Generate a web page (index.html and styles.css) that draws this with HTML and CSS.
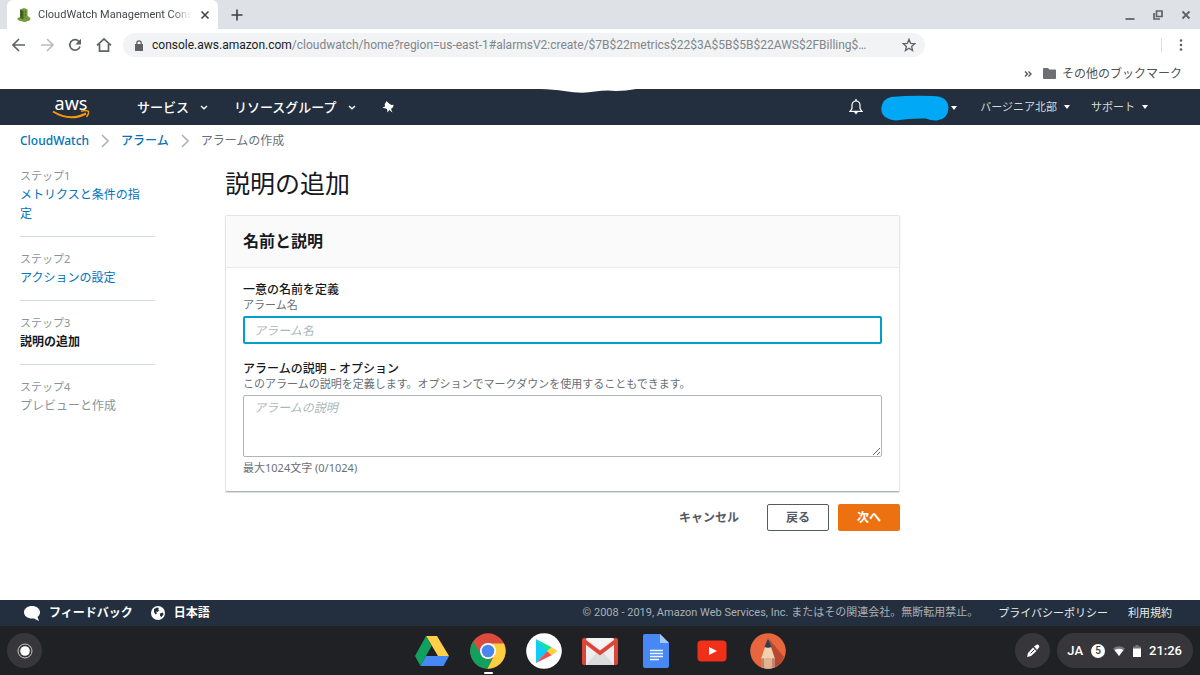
FILE: index.html
```html
<!DOCTYPE html>
<html lang="ja">
<head>
<meta charset="utf-8">
<meta name="viewport" content="width=device-width, initial-scale=1">
<title>CloudWatch Management Console</title>
<link rel="stylesheet" href="styles.css">
</head>
<body>
<div class="tabstrip">
  <div class="tab">
    <svg class="favicon" width="14" height="14" viewBox="0 0 14 14" aria-hidden="true"><path d="M3 1.500L7 0l3.500 1.500V8l3 2-.5 2-5 2-7-2-.5-2L3 9z" fill="#6f9a3c"/><path d="M3 1.500L6.500 3v8.500L3 10z" fill="#4b612c"/><path d="M1 10l6 1.500 6-1.500-.3 2L7.500 14 .8 12z" fill="#759c3e"/><path d="M4.500 3v1.500M4.500 6v1.500M8 4h1M8 7h1" stroke="#34451d" stroke-width="1"/></svg>
    <span class="tab-title">CloudWatch Management Cons</span>
    <button class="icon-btn" aria-label="タブを閉じる"><svg width="10" height="10" viewBox="0 0 10 10"><path d="M1.500 1.500l7 7m0-7l-7 7" stroke="#3c4043" stroke-width="1.500"/></svg></button>
  </div>
  <button class="icon-btn new-tab" aria-label="新しいタブ"><svg width="12" height="12" viewBox="0 0 12 12"><path d="M6 .5v11M.5 6h11" stroke="#3c4043" stroke-width="1.600"/></svg></button>
  <div class="window-controls">
    <button class="icon-btn" aria-label="最小化"><svg width="10" height="12" viewBox="0 0 10 12"><path d="M.5 10h9" stroke="#5f6368" stroke-width="1.800"/></svg></button>
    <button class="icon-btn" aria-label="元に戻す"><svg width="10" height="10" viewBox="0 0 10 10"><path d="M3.500 1h5.500v5.500h-5.500zM1 3v6h6" fill="none" stroke="#5f6368" stroke-width="1.700"/></svg></button>
    <button class="icon-btn" aria-label="閉じる"><svg width="10" height="10" viewBox="0 0 10 10"><path d="M1.500 1.500l7 7m0-7l-7 7" stroke="#5f6368" stroke-width="1.800"/></svg></button>
  </div>
</div>

<div class="toolbar">
  <button class="icon-btn" aria-label="戻る"><svg width="14" height="14" viewBox="0 0 14 14"><path d="M13 7H1.500M7 1L1 7l6 6" fill="none" stroke="#5f6368" stroke-width="1.600"/></svg></button>
  <button class="icon-btn" aria-label="進む"><svg width="14" height="14" viewBox="0 0 14 14"><path d="M1 7h11.500M7 1l6 6-6 6" fill="none" stroke="#babcbe" stroke-width="1.600"/></svg></button>
  <button class="icon-btn" aria-label="再読み込み"><svg width="14" height="14" viewBox="0 0 14 14"><path d="M12 8.500A5.200 5.200 0 1 1 10.800 3.300L12 4.500" fill="none" stroke="#5f6368" stroke-width="1.700"/><path d="M13 .8v5.700H7.300z" fill="#5f6368"/></svg></button>
  <button class="icon-btn" aria-label="ホーム"><svg width="16" height="16" viewBox="0 0 16 16"><path d="M1 8.300L8 1.800l7 6.500M3.500 7v7.200h9V7" fill="none" stroke="#5f6368" stroke-width="1.700"/></svg></button>
  <div class="omnibox">
    <svg width="8" height="11" viewBox="0 0 8 11" aria-hidden="true"><path d="M0 4h8v7H0z" fill="#5f6368"/><path d="M1.800 4.500V3a2.200 2.200 0 0 1 4.400 0v1.500" fill="none" stroke="#5f6368" stroke-width="1.200"/></svg>
    <div class="url"><span class="host">console.aws.amazon.com</span>/cloudwatch/home?region=us-east-1#alarmsV2:create/$7B$22metrics$22$3A$5B$5B$22AWS$2FBilling$…</div>
    <button class="icon-btn" aria-label="ブックマークに追加"><svg width="14" height="14" viewBox="0 0 14 14"><path d="M7 1.300l1.600 4 4.300.3-3.300 2.800 1 4.200L7 10.300l-3.600 2.300 1-4.200L1.100 5.600l4.300-.3z" fill="none" stroke="#5f6368" stroke-width="1.300"/></svg></button>
  </div>
  <div class="toolbar-end">
    <span class="toolbar-sep"></span>
    <button class="icon-btn" aria-label="メニュー"><svg width="4" height="12" viewBox="0 0 4 12" fill="#5f6368"><circle cx="2" cy="1.500" r="1.300"/><circle cx="2" cy="6" r="1.300"/><circle cx="2" cy="10.500" r="1.300"/></svg></button>
  </div>
</div>

<div class="bookmarks">
  <button class="icon-btn" aria-label="他のブックマークを表示"><svg width="8" height="6" viewBox="0 0 8 6"><path d="M1 .5L3.500 3 1 5.500M4.500 .5L7 3 4.500 5.500" fill="none" stroke="#4d5156" stroke-width="1.300"/></svg></button>
  <button class="folder"><svg width="13" height="11" viewBox="0 0 13 11" aria-hidden="true"><path d="M1 0h4l1.500 1.500H12a1 1 0 0 1 1 1V10a1 1 0 0 1-1 1H1a1 1 0 0 1-1-1V1a1 1 0 0 1 1-1z" fill="#6b6e72"/></svg>その他のブックマーク</button>
</div>

<header class="nav">
  <svg class="scribble" width="96" height="5" viewBox="0 0 96 5" aria-hidden="true"><path d="M0 0Q14 .5 24 2Q42 5 55 2.500Q66 1 76 2Q86 2 96 0z" fill="#fff"/></svg>
  <a class="aws-logo" href="#" aria-label="AWS">
    <span class="aws-word">aws</span>
    <svg class="aws-smile" width="38" height="9" viewBox="0 0 38 9" aria-hidden="true"><path d="M1 1.500Q18 12 34 3.500" fill="none" stroke="#f90" stroke-width="2"/><path d="M29 1.300Q34 0 36.500 1.300Q37 4 34.500 7" fill="none" stroke="#f90" stroke-width="1.400"/></svg>
  </a>
  <button class="nav-main">サービス<svg width="8" height="5" viewBox="0 0 8 5"><path d="M1 1l3 2.800L7 1" fill="none" stroke="#fff" stroke-width="1.400"/></svg></button>
  <button class="nav-main">リソースグループ<svg width="8" height="5" viewBox="0 0 8 5"><path d="M1 1l3 2.800L7 1" fill="none" stroke="#fff" stroke-width="1.400"/></svg></button>
  <button class="icon-btn pin" aria-label="ピン留め"><svg width="12" height="12" viewBox="0 0 12 12"><path d="M4.500 0L7 2.500 9.500 4l2-.2-.3 2.200L9 8l1.500 3.500L7.300 9 5.500 11.500 5 8 .3 6.500 3 5.500 2.700 3 3.500 2z" fill="#fff"/></svg></button>
  <div class="nav-end">
    <button class="icon-btn" aria-label="通知"><svg width="14" height="16" viewBox="0 0 14 16"><path d="M1 12.300h12L11 9.500V6a4 4 0 0 0-8 0v3.500z" fill="none" stroke="#fff" stroke-width="1.200"/><path d="M5 13h4l-2 2.500zM6.300 0h1.400v2H6.300z" fill="#fff"/></svg></button>
    <button class="account" aria-label="アカウント"><svg width="68" height="26" viewBox="0 0 68 26"><path d="M10 2Q30 0 52 1Q67 1 67.500 13Q67 24 56 25.500Q50 26 45 23.500Q30 23 15 25.500Q0 24 .3 13.500Q1 4 10 2z" fill="#00a8f6"/></svg><span class="caret"></span></button>
    <button class="nav-sub">バージニア北部<span class="caret"></span></button>
    <button class="nav-sub">サポート<span class="caret"></span></button>
  </div>
</header>

<nav class="breadcrumbs" aria-label="パンくず">
  <a class="crumb-root" href="#">CloudWatch</a>
  <svg width="8" height="14" viewBox="0 0 8 14" aria-hidden="true"><path d="M1 1l6 6-6 6" fill="none" stroke="#aab7b8" stroke-width="1.600"/></svg>
  <a class="crumb-mid" href="#">アラーム</a>
  <svg width="8" height="14" viewBox="0 0 8 14" aria-hidden="true"><path d="M1 1l6 6-6 6" fill="none" stroke="#aab7b8" stroke-width="1.600"/></svg>
  <span>アラームの作成</span>
</nav>

<div class="content">
  <ol class="steps">
    <li><div class="step-no">ステップ1</div><a href="#">メトリクスと条件の指定</a></li>
    <li><div class="step-no">ステップ2</div><a href="#">アクションの設定</a></li>
    <li><div class="step-no">ステップ3</div><span class="current">説明の追加</span></li>
    <li><div class="step-no">ステップ4</div><span>プレビューと作成</span></li>
  </ol>
  <main>
    <h1>説明の追加</h1>
    <form>
      <section class="card">
        <h2>名前と説明</h2>
        <div class="fields">
          <div class="field">
            <label for="name">一意の名前を定義</label>
            <p class="note">アラーム名</p>
            <input class="text-input" id="name" type="text" placeholder="アラーム名">
          </div>
          <div class="field">
            <label for="desc">アラームの説明 – オプション</label>
            <p class="note">このアラームの説明を定義します。オプションでマークダウンを使用することもできます。</p>
            <textarea class="text-area" id="desc" placeholder="アラームの説明"></textarea>
            <p class="note hint">最大1024文字 (0/1024)</p>
          </div>
        </div>
      </section>
      <div class="actions">
        <button type="button" class="btn btn-link">キャンセル</button>
        <button type="button" class="btn btn-normal">戻る</button>
        <button type="button" class="btn btn-primary">次へ</button>
      </div>
    </form>
  </main>
</div>

<footer class="footer">
  <button class="foot-btn"><svg width="16" height="15" viewBox="0 0 16 15" aria-hidden="true"><path d="M8 0c4.500 0 8 2.600 8 6.200 0 2-1 3.700-2.500 4.800l1.500 4-5-2.600c-5.500.8-10-2-10-6.200C0 2.600 3.500 0 8 0z" fill="#fff"/></svg>フィードバック</button>
  <button class="foot-btn"><svg width="14" height="14" viewBox="0 0 14 14" aria-hidden="true"><circle cx="7" cy="7" r="7" fill="#fff"/><path d="M3 3l3-1.500 2 .5-1 1.500 1.500.5-2 2-1.500-.5 1 2-1.500 1L3 6zM9 7.500l3-1 .5 2-2 2.500-1.500-1z" fill="#232f3e"/></svg>日本語</button>
  <span class="copyright">© 2008 - 2019, Amazon Web Services, Inc. またはその関連会社。無断転用禁止。</span>
  <a href="#">プライバシーポリシー</a>
  <a href="#">利用規約</a>
</footer>

<div class="shelf">
  <button class="round" aria-label="ランチャー"><svg width="16" height="16" viewBox="0 0 16 16"><circle cx="8" cy="8" r="7" fill="none" stroke="#c4c5c8" stroke-width="1"/><circle cx="8" cy="8" r="4.800" fill="#fff"/></svg></button>
  <div class="apps">
    <button class="app" aria-label="ドライブ"><svg width="36" height="36" viewBox="0 0 36 36"><path d="M12 3h11l12 20H24z" fill="#ffcf48"/><path d="M12 3l5.500 10L6.500 33 1 23z" fill="#11a15f"/><path d="M12 23h23l-5.500 10h-23z" fill="#4688f4"/></svg></button>
    <button class="app active" aria-label="Chrome"><svg width="36" height="36" viewBox="0 0 36 36"><circle cx="18" cy="18" r="17.700" fill="#dd4b3e"/><path d="M18 10.500h16A17.700 17.700 0 0 1 17.300 35.700L24.500 22z" fill="#ffcd40"/><path d="M3 8.500L11.500 22q4 5 11 3.500L17.300 35.700A17.700 17.700 0 0 1 3 8.500z" fill="#12a05d"/><circle cx="18" cy="18" r="8" fill="#fff"/><circle cx="18" cy="18" r="6.300" fill="#4a86ee"/></svg></button>
    <button class="app" aria-label="Play ストア"><svg width="36" height="36" viewBox="0 0 36 36"><circle cx="18" cy="18" r="17.800" fill="#fff"/><path d="M10 6l12 12-12 12z" fill="#12ccf5"/><path d="M10 6l16 8.500-4.500 4z" fill="#10e49a"/><path d="M10 30l16-8-4.500-4z" fill="#ef4d4f"/><path d="M25.500 14l6 4-6 4.500L21 18z" fill="#ffcf43"/></svg></button>
    <button class="app" aria-label="Gmail"><svg width="36" height="36" viewBox="0 0 36 36"><rect y="5" width="36" height="27" rx="2" fill="#dc4638"/><path d="M4 6h28v26H4z" fill="#eee"/><path d="M4 32l10-12 4 3 4-3 10 12z" fill="#dcdcdc"/><path d="M4 5h28L18 16z" fill="#f4f4f4"/><path d="M1.500 7.500L18 20 34.500 7.500" fill="none" stroke="#dc4638" stroke-width="4"/></svg></button>
    <button class="app" aria-label="ドキュメント"><svg width="36" height="36" viewBox="0 0 36 36"><path d="M7 1h15l9 9v23a2 2 0 0 1-2 2H7a2 2 0 0 1-2-2V3a2 2 0 0 1 2-2z" fill="#4788f4"/><path d="M22 1l9 9h-9z" fill="#a5c7fc"/><path d="M12 17.500h13M12 20.500h13M12 23.500h13M12 26.500h9" stroke="#f2f7ff" stroke-width="1.500"/></svg></button>
    <button class="app" aria-label="YouTube"><svg width="36" height="36" viewBox="0 0 36 36"><rect x="3.500" y="7.500" width="29" height="21" rx="4" fill="#f03018"/><path d="M15 14l8 4-8 4z" fill="#fff"/></svg></button>
    <button class="app" aria-label="スケッチ"><svg width="36" height="36" viewBox="0 0 36 36"><circle cx="18" cy="18" r="17.800" fill="#e8663d"/><path d="M19 6l15 18q-3 8-11 11z" fill="#b94832"/><path d="M18 5l7 21v8q-7 3-14 0v-8z" fill="#efd3ae"/><path d="M18 5l3.500 9q-3.500 1.500-7 0z" fill="#333c4a"/><path d="M11 26q2-2 3.500 0v9.200L11 34zM21.500 26q2-2 3.500 0v8l-3.500 1.200z" fill="#bd8672"/><path d="M14.500 26q3.500-3 7 0v9.200q-3.500.8-7 0z" fill="#e5b191"/></svg></button>
  </div>
  <div class="tray">
    <button class="round" aria-label="タッチペン"><svg width="14" height="14" viewBox="0 0 14 14"><path d="M1 13l1-4 5-5.500L10.500 7 5 12zM8 2.500L10 1q2-1 3 .5T12.500 4L11 6z" fill="#fff"/><path d="M4.500 9.500l4-4" stroke="#35353a" stroke-width="1"/></svg></button>
    <button class="status">
      <span>JA</span>
      <span class="badge">5</span>
      <svg width="12" height="10" viewBox="0 0 12 10" aria-hidden="true"><path d="M0 2.500Q6-2 12 2.500L6 10z" fill="#77777b"/><path d="M1.500 4Q6 1.500 10.500 4L6 10z" fill="#fff"/></svg>
      <svg width="8" height="12" viewBox="0 0 8 12" aria-hidden="true"><path d="M2.500 0h3v1.500H8V12H0V1.500h2.500z" fill="#77777b"/><path d="M0 3.500h8V12H0z" fill="#fff"/></svg>
      <span class="clock">21:26</span>
    </button>
  </div>
</div>
</body>
</html>
```

FILE: styles.css
```css
* {
  box-sizing: border-box;
}

body {
  margin: 0;
  min-height: 100vh;
  display: flex;
  flex-direction: column;
  background: #fff;
  color: #16191f;
  font: 12px/18px "Noto Sans", "Noto Sans CJK JP", sans-serif;
}

button {
  padding: 0;
  border: 0;
  background: none;
  color: inherit;
  font: inherit;
  cursor: pointer;
}

a {
  color: #0073bb;
  text-decoration: none;
}

h1, h2, p, ol {
  margin: 0;
  padding: 0;
}

svg {
  display: block;
  flex: none;
}

.icon-btn {
  display: flex;
  flex: none;
}

/* Browser window */
.tabstrip {
  display: flex;
  align-items: center;
  height: 29px;
  padding: 0 9px 0 7px;
  background: #dee1e6;
}

.tab {
  display: flex;
  align-items: center;
  gap: 7px;
  width: 211px;
  height: 29px;
  padding: 0 9px 0 10px;
  border-radius: 6px 6px 0 0;
  background: #fff;
}

.tab-title {
  flex: 1;
  white-space: nowrap;
  color: #45494d;
  font: 11px/16px Roboto, sans-serif;
  mask-image: linear-gradient(to right, #000 86%, transparent 99%);
}

.new-tab {
  margin-left: 13px;
}

.window-controls {
  display: flex;
  align-items: center;
  gap: 18px;
  margin-left: auto;
}

.toolbar {
  display: flex;
  align-items: center;
  gap: 14px;
  height: 32px;
  padding: 0 17px 0 12px;
}

.omnibox {
  display: flex;
  align-items: center;
  gap: 9px;
  width: 802px;
  height: 24px;
  min-width: 0;
  margin-left: -3px;
  padding: 0 9px 0 12px;
  border-radius: 12px;
  background: #f1f3f4;
}

.url {
  flex: 1;
  overflow: hidden;
  white-space: nowrap;
  text-overflow: ellipsis;
  color: #80868b;
  font: 12px/16px Roboto, sans-serif;
}

.host {
  color: #202124;
}

.toolbar-end {
  display: flex;
  align-items: center;
  gap: 17px;
  margin-left: auto;
}

.toolbar-sep {
  width: 1px;
  height: 14px;
  background: #dadce0;
}

.bookmarks {
  display: flex;
  align-items: center;
  justify-content: flex-end;
  gap: 11px;
  height: 28px;
  padding: 0 18px 3px 0;
}

.folder {
  display: flex;
  align-items: center;
  gap: 6px;
  color: #4d5156;
}

/* Console header */
.nav {
  position: relative;
  display: flex;
  align-items: center;
  height: 36px;
  padding: 0 52px;
  background: #232f3e;
  color: #fff;
}

.scribble {
  position: absolute;
  top: 0;
  left: 45%;
}

.aws-logo {
  display: flex;
  flex-direction: column;
  width: 38px;
  margin-right: 47px;
  color: #fff;
}

.aws-word {
  font-size: 18px;
  line-height: 14px;
  text-align: center;
}

.nav-main {
  display: flex;
  align-items: center;
  gap: 11px;
  margin-right: 26px;
  font-size: 13px;
  font-weight: 500;
}

.nav-end {
  display: flex;
  align-items: center;
  margin-left: auto;
}

.account {
  display: flex;
  align-items: center;
  gap: 2px;
  margin: 2px 23px 0 18px;
}

.nav-sub {
  display: flex;
  align-items: center;
  gap: 7px;
  color: #d5dbdb;
  font-size: 11px;
}

.nav-sub + .nav-sub {
  margin-left: 21px;
}

.caret {
  border: 3px solid transparent;
  border-top: 4px solid #fff;
  border-bottom: 0;
}

.breadcrumbs {
  display: flex;
  align-items: center;
  gap: 12px;
  padding: 7px 20px 0;
  color: #687078;
}

.crumb-root,
.crumb-mid {
  font-weight: 500;
}

/* Page */
.content {
  display: flex;
  gap: 70px;
  flex: 1;
  padding: 4px 20px 20px;
}

.steps {
  flex: none;
  width: 135px;
  list-style: none;
  color: #879596;
  line-height: 19px;
}

.steps li {
  padding: 13px 10px 13px 0;
  border-bottom: 1px solid #d5dbdb;
}

.steps li:last-child {
  border-bottom: 0;
}

.step-no {
  font-size: 11px;
  line-height: 18px;
}

.current {
  color: #16191f;
  font-weight: 700;
}

main {
  flex: 1;
  max-width: 675px;
  padding-top: 11px;
}

h1 {
  font-size: 25px;
  line-height: 36px;
  font-weight: 400;
}

.card {
  margin-top: 14px;
  border: 1px solid #e3e6e6;
  border-bottom-color: #aab7b8;
  border-radius: 2px;
  box-shadow: 0 1px 1px rgba(0, 28, 36, 0.15);
}

h2 {
  padding: 12px 17px;
  border-bottom: 1px solid #eaeded;
  background: #fafafa;
  font-size: 16px;
  line-height: 27px;
  font-weight: 700;
}

.fields {
  display: flex;
  flex-direction: column;
  gap: 17px;
  padding: 14px 17px 16px;
}

.field label {
  display: block;
  line-height: 16px;
  font-weight: 500;
}

.note {
  color: #687078;
  font-size: 11px;
  line-height: 14px;
}

.hint {
  margin-top: 4px;
}

.text-input,
.text-area {
  display: block;
  width: 100%;
  margin-top: 4px;
  padding: 3px 10px;
  border: 1px solid #aab7b8;
  border-radius: 2px;
  background: #fff;
  font: inherit;
}

.text-input {
  height: 28px;
  padding: 3px 9px;
  border: 2px solid #00a1c9;
}

.text-area {
  height: 62px;
  resize: vertical;
}

.text-input::placeholder,
.text-area::placeholder {
  color: #aab7b8;
  font-style: italic;
}

.actions {
  display: flex;
  justify-content: flex-end;
  gap: 9px;
  margin-top: 12px;
}

.btn {
  height: 27px;
  padding: 0 18px;
  border: 1px solid transparent;
  border-radius: 2px;
  color: #545b64;
  font-weight: 700;
}

.btn-normal {
  border-color: #545b64;
}

.btn-primary {
  background: #ec7211;
  color: #fff;
}

.footer {
  display: flex;
  align-items: center;
  height: 26px;
  padding: 0 28px 0 24px;
  background: #232f3e;
  color: #d5dbdb;
  font-size: 11px;
}

.footer a {
  margin-left: 20px;
  color: #e8ecec;
}

.foot-btn {
  display: flex;
  align-items: center;
  gap: 9px;
  margin-right: 18px;
  color: #fff;
  font-size: 12px;
  font-weight: 700;
}

.copyright {
  margin-left: auto;
  color: #aab0b6;
  font-family: Roboto, "Noto Sans CJK JP", sans-serif;
}

/* Shelf */
.shelf {
  display: grid;
  grid-template-columns: 1fr auto 1fr;
  align-items: center;
  height: 49px;
  padding: 0 7px;
  background: #202124;
  color: #fff;
}

.round {
  display: grid;
  place-items: center;
  width: 35px;
  height: 35px;
  border-radius: 50%;
  background: #37373b;
}

.apps {
  display: flex;
  gap: 20px;
}

.app {
  position: relative;
}

.active::after {
  content: "";
  position: absolute;
  left: 14px;
  bottom: -5px;
  width: 9px;
  height: 2px;
  border-radius: 1px;
  background: #fff;
}

.tray {
  display: flex;
  justify-content: flex-end;
  gap: 7px;
}

.status {
  display: flex;
  align-items: center;
  gap: 8px;
  height: 35px;
  padding: 0 11px 0 10px;
  border-radius: 18px;
  background: #37373b;
  font: 500 13px/18px Roboto, sans-serif;
}

.badge {
  width: 14px;
  height: 14px;
  border-radius: 50%;
  background: #fff;
  color: #37373b;
  font-size: 10px;
  line-height: 14px;
  text-align: center;
}
```
